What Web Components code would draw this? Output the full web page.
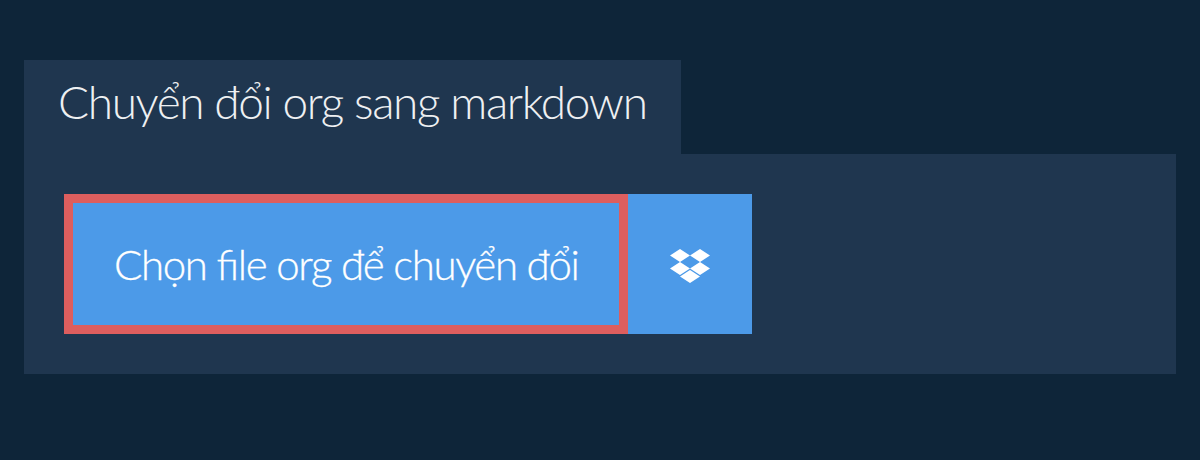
<!DOCTYPE html>
<html><head><meta charset="utf-8"><style>
html,body{margin:0;height:100%;background:#0e2539}
body{font-family:Lato,"Noto Sans",sans-serif;}
</style></head><body>
<conv-app>
<conv-tab slot="tab">Chuyển đổi org sang markdown</conv-tab>
<conv-button>Chọn file org để chuyển đổi</conv-button>
<drop-button></drop-button>
</conv-app>
<script>
customElements.define('conv-app',class extends HTMLElement{constructor(){super();this.attachShadow({mode:'open'}).innerHTML=`<style>
:host{display:block;padding:60px 24px 0}
.panel{background:#1f364f;padding:40px;display:flex}
</style><slot name="tab"></slot><div class="panel"><slot></slot></div>`}});
customElements.define('conv-tab',class extends HTMLElement{constructor(){super();this.attachShadow({mode:'open'}).innerHTML=`<style>
:host{display:block;box-sizing:border-box;width:657px;background:#1f364f;color:#eef0f2;font:300 46px/84px Lato,sans-serif;letter-spacing:-1.38px;padding:0 34px;height:94px;white-space:nowrap}
</style><slot></slot>`}});
customElements.define('conv-button',class extends HTMLElement{constructor(){super();this.attachShadow({mode:'open'}).innerHTML=`<style>
:host{display:block;box-sizing:border-box;width:564px;height:140px;border:9px solid #dd5e5e;background:#4c9ae8;color:#fff;font:300 42px/122px Lato,sans-serif;font-feature-settings:"liga" 1;-webkit-text-stroke:.3px #fff;letter-spacing:-1.38px;padding:0 41px;white-space:nowrap}
</style><slot></slot>`}});
customElements.define('drop-button',class extends HTMLElement{constructor(){super();this.attachShadow({mode:'open'}).innerHTML=`<style>
:host{display:flex;width:124px;height:140px;background:#4c9ae8;align-items:center;justify-content:center}
svg{width:40px;height:34px;fill:#fff;margin-top:4px}
</style><svg viewBox="0 0 40 34"><path d="M10 0 20 6.5 10 13 0 6.5ZM30 0 40 6.5 30 13 20 6.5ZM10 13 20 19.5 10 26 0 19.5ZM30 13 40 19.5 30 26 20 19.5ZM20 21 30 27.5 20 34 10 27.5Z"/></svg>`}});
</script>
</body></html>
